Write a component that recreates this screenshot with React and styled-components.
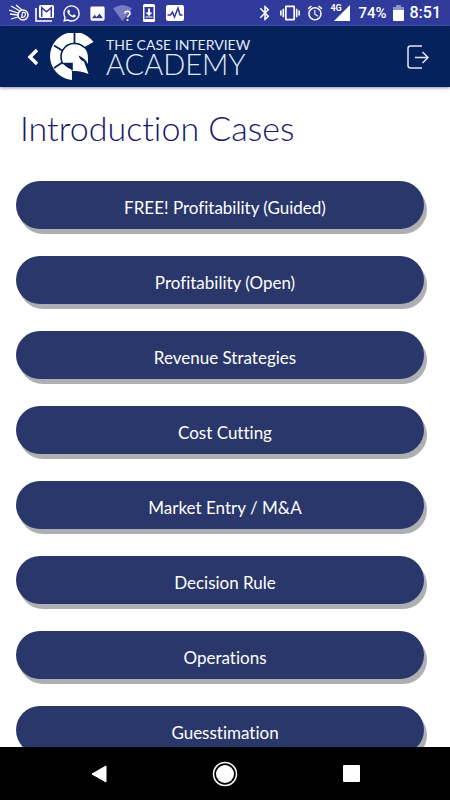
import styled, { createGlobalStyle } from "styled-components";
import { FaWhatsapp } from "react-icons/fa";
import { MdImage, MdBluetooth, MdVibration, MdAlarm } from "react-icons/md";

const cases = [
    "FREE! Profitability (Guided)",
    "Profitability (Open)",
    "Revenue Strategies",
    "Cost Cutting",
    "Market Entry / M&A",
    "Decision Rule",
    "Operations",
    "Guesstimation",
];

const CometIcon = () => (
    <svg width="20" height="18" viewBox="0 0 20 18" fill="none" stroke="#fff">
        <path d="M2 2l9 5M7 1l6 5M0 6l9 3M1 10l8 1M2 15l7-2" strokeWidth="1.3" />
        <circle cx="14" cy="11" r="5" strokeWidth="1.5" />
        <path d="M12.6 13.4l1-5h1.2c2.6 0 1.8 5-1 5z" strokeWidth="1.2" />
    </svg>
);

const GmailIcon = () => (
    <svg width="20" height="18" viewBox="0 0 20 18">
        <path d="M1 4v13h16" fill="none" stroke="#fff" strokeWidth="1.6" />
        <rect x="4" y="1" width="15" height="13" rx="1.5" fill="#fff" />
        <path d="M6.7 13V3.6l4.8 4.2 4.8-4.2V13" fill="none" stroke="#2f3a9b" strokeWidth="1.5" />
    </svg>
);

const WifiIcon = () => (
    <svg width="20" height="18" viewBox="0 0 20 18">
        <path d="M0 4.5Q9.5-2.5 19 4.5L9.5 17z" fill="#767dc2" />
        <path d="M12 9.5c0-3 5-3 5 0 0 2-2.5 1.8-2.5 4" fill="none" stroke="#fff" strokeWidth="1.7" />
        <circle cx="14.5" cy="16" r="1.1" fill="#fff" />
    </svg>
);

const UpdateIcon = () => (
    <svg width="12" height="18" viewBox="0 0 12 18">
        <rect width="12" height="18" rx="1.5" fill="#fff" />
        <path d="M1.5 3h9v12h-9z" fill="#2f3a9b" />
        <path d="M5 4.5h2v4h2.5L6 12 2.5 8.5H5zM2.5 12.5h7v1h-7z" fill="#fff" />
    </svg>
);

const PulseIcon = () => (
    <svg width="18" height="16" viewBox="0 0 18 16">
        <rect width="18" height="16" rx="2" fill="#fff" />
        <path d="M1.5 10h3l2-3 2 5 3.5-9 2 7h2.5" fill="none" stroke="#2f3a9b" strokeWidth="1.5" />
    </svg>
);

const SignalIcon = () => (
    <svg width="16" height="16" viewBox="0 0 16 16">
        <path d="M16 0v16H0z" fill="#fff" />
    </svg>
);

const BatteryIcon = () => (
    <svg width="11" height="16" viewBox="0 0 11 16">
        <path d="M3 0h5v2h3v3H0V2h3z" fill="#8a91cc" />
        <path d="M0 5h11v10q0 1-1 1H1q-1 0-1-1z" fill="#fff" />
    </svg>
);

const BackIcon = () => (
    <svg width="12" height="18" viewBox="0 0 12 18" fill="none" stroke="#fff" strokeWidth="3.5">
        <path d="M11 2L4 9l7 7" />
    </svg>
);

const HelmetIcon = () => (
    <svg width="44" height="48" viewBox="0 0 44 48">
        <path
            d="M43.5 9A24 24 0 1 0 22 47V36.5A13.5 13.5 0 1 1 34.5 14z"
            fill="#fff"
        />
        <path
            d="M24.5 0v10M4 12.5l9 5.5M4 35l9-6"
            stroke="#05225c"
            strokeWidth="1.8"
        />
        <path
            d="M12.5 30.500C8 20 14.500 10.500 24.500 10.500C33 10.500 38 17 38 25V31C36 27 32.500 24 28.500 22.500C29.500 26 31.500 27.500 34 28.500L38.500 41C33 38.500 27.500 38 22 38V30.500Z"
            fill="#fff"
        />
        <path
            d="M22 37.500V30.500H12.500C8 20 14.500 10.500 24.500 10.500C29 10.500 32.500 12.500 35 15"
            fill="none"
            stroke="#05225c"
            strokeWidth="1.6"
        />
    </svg>
);

const ExitIcon = () => (
    <svg width="24" height="26" viewBox="0 0 24 26" fill="none" stroke="#dfe6f5" strokeWidth="1.5">
        <path d="M16 2H4.5Q2 2 2 4.5v17Q2 24 4.5 24H16M9 13.5h13M16.5 8l5.5 5.5-5.5 5.5" />
    </svg>
);

const App = () => (
    <Screen>
        <GlobalStyle />
        <StatusBar>
            <StatusLeft>
                <Slot><CometIcon /></Slot>
                <Slot><GmailIcon /></Slot>
                <Slot><FaWhatsapp size={19} /></Slot>
                <Slot><MdImage size={19} /></Slot>
                <Slot><WifiIcon /></Slot>
                <Slot><UpdateIcon /></Slot>
                <Slot><PulseIcon /></Slot>
            </StatusLeft>
            <StatusRight>
                <MdBluetooth size={18} />
                <MdVibration size={20} />
                <MdAlarm size={18} />
                <Signal>
                    <Network>4G</Network>
                    <SignalIcon />
                </Signal>
                <Percent>74%</Percent>
                <BatteryIcon />
                <StatusText>8:51</StatusText>
            </StatusRight>
        </StatusBar>
        <Header>
            <IconButton aria-label="Back"><BackIcon /></IconButton>
            <Brand>
                <HelmetIcon />
                <BrandText>
                    <BrandTop>THE CASE INTERVIEW</BrandTop>
                    <BrandName>ACADEMY</BrandName>
                </BrandText>
            </Brand>
            <IconButton aria-label="Log out"><ExitIcon /></IconButton>
        </Header>
        <Content>
            <Title>Introduction Cases</Title>
            <CaseList>
                {cases.map((name) => (
                    <CaseButton key={name}>{name}</CaseButton>
                ))}
            </CaseList>
        </Content>
        <NavBar>
            <NavButton aria-label="Back">
                <svg width="16" height="18" viewBox="0 0 16 18">
                    <path d="M15 1v16L1 9z" fill="#fff" stroke="#fff" strokeLinejoin="round" />
                </svg>
            </NavButton>
            <NavButton aria-label="Home">
                <svg width="26" height="26" viewBox="0 0 26 26">
                    <circle cx="13" cy="13" r="11.5" fill="none" stroke="#fff" strokeWidth="1.5" />
                    <circle cx="13" cy="13" r="9" fill="#fff" />
                </svg>
            </NavButton>
            <NavButton aria-label="Recent apps">
                <svg width="17" height="17" viewBox="0 0 17 17">
                    <rect width="17" height="17" rx="1" fill="#fff" />
                </svg>
            </NavButton>
        </NavBar>
    </Screen>
);

const GlobalStyle = createGlobalStyle`
    * {
        box-sizing: border-box;
    }
    body {
        margin: 0;
        background: #fff;
        font-family: Lato, "Open Sans", sans-serif;
        font-variant-ligatures: none;
    }
    svg {
        display: block;
        flex-shrink: 0;
    }
`;
const Screen = styled.div`
    display: flex;
    flex-direction: column;
    height: 100vh;
`;
const StatusBar = styled.div`
    display: flex;
    justify-content: space-between;
    align-items: center;
    flex-shrink: 0;
    height: 26px;
    padding: 0 9px 0 6px;
    background: #2f3a9b;
    color: #fff;
    font-family: Roboto, sans-serif;
`;
const StatusLeft = styled.div`
    display: flex;
`;
const Slot = styled.span`
    display: flex;
    justify-content: center;
    align-items: center;
    width: 26px;
`;
const StatusRight = styled.div`
    display: flex;
    align-items: center;
    gap: 6px;
`;
const Signal = styled.span`
    display: flex;
    position: relative;
    padding-left: 4px;
`;
const Network = styled.span`
    position: absolute;
    top: -1px;
    left: 0;
    font-size: 9px;
    line-height: 9px;
    font-weight: 700;
`;
const StatusText = styled.span`
    font-size: 16px;
    line-height: 26px;
    font-weight: 500;
`;
const Percent = styled(StatusText)`
    padding-left: 2px;
    font-size: 15px;
`;
const Header = styled.header`
    display: flex;
    align-items: center;
    flex-shrink: 0;
    height: 61px;
    padding: 0 16px 0 22px;
    background: #05225c;
    box-shadow: 0 1px 3px #8a90ac;
    z-index: 1;
`;
const IconButton = styled.button`
    display: flex;
    padding: 4px;
    border: none;
    background: transparent;
    cursor: pointer;
`;
const Brand = styled.div`
    display: flex;
    flex: 1;
    align-items: center;
    gap: 12px;
    padding-left: 8px;
    color: #e4eaf8;
`;
const BrandText = styled.div`
    display: flex;
    flex-direction: column;
    white-space: nowrap;
`;
const BrandTop = styled.span`
    font-size: 14px;
    line-height: 14px;
`;
const BrandName = styled.span`
    font-size: 29px;
    line-height: 24px;
    font-weight: 300;
`;
const Content = styled.main`
    flex: 1;
    min-height: 0;
    padding: 0 26px 0 16px;
    overflow-y: auto;
    scrollbar-width: none;
`;
const Title = styled.h1`
    margin: 0;
    padding: 20px 4px 32px;
    color: #19176a;
    font-size: 34px;
    line-height: 42px;
    font-weight: 300;
`;
const CaseList = styled.div`
    display: flex;
    flex-direction: column;
    gap: 27px;
    padding-bottom: 27px;
`;
const CaseButton = styled.button`
    height: 48px;
    padding: 6px 16px 0 26px;
    border: none;
    border-radius: 24px;
    background: #2a376a;
    box-shadow: 3px 5px 0 #adafb2;
    color: #fff;
    font-family: inherit;
    font-variant-ligatures: inherit;
    font-size: 17px;
    line-height: 24px;
    cursor: pointer;
`;
const NavBar = styled.nav`
    display: flex;
    justify-content: center;
    align-items: center;
    gap: 100px;
    flex-shrink: 0;
    height: 53px;
    background: #000;
`;
const NavButton = styled(IconButton)`
    justify-content: center;
    width: 26px;
    padding: 0;
`;

export default App;
